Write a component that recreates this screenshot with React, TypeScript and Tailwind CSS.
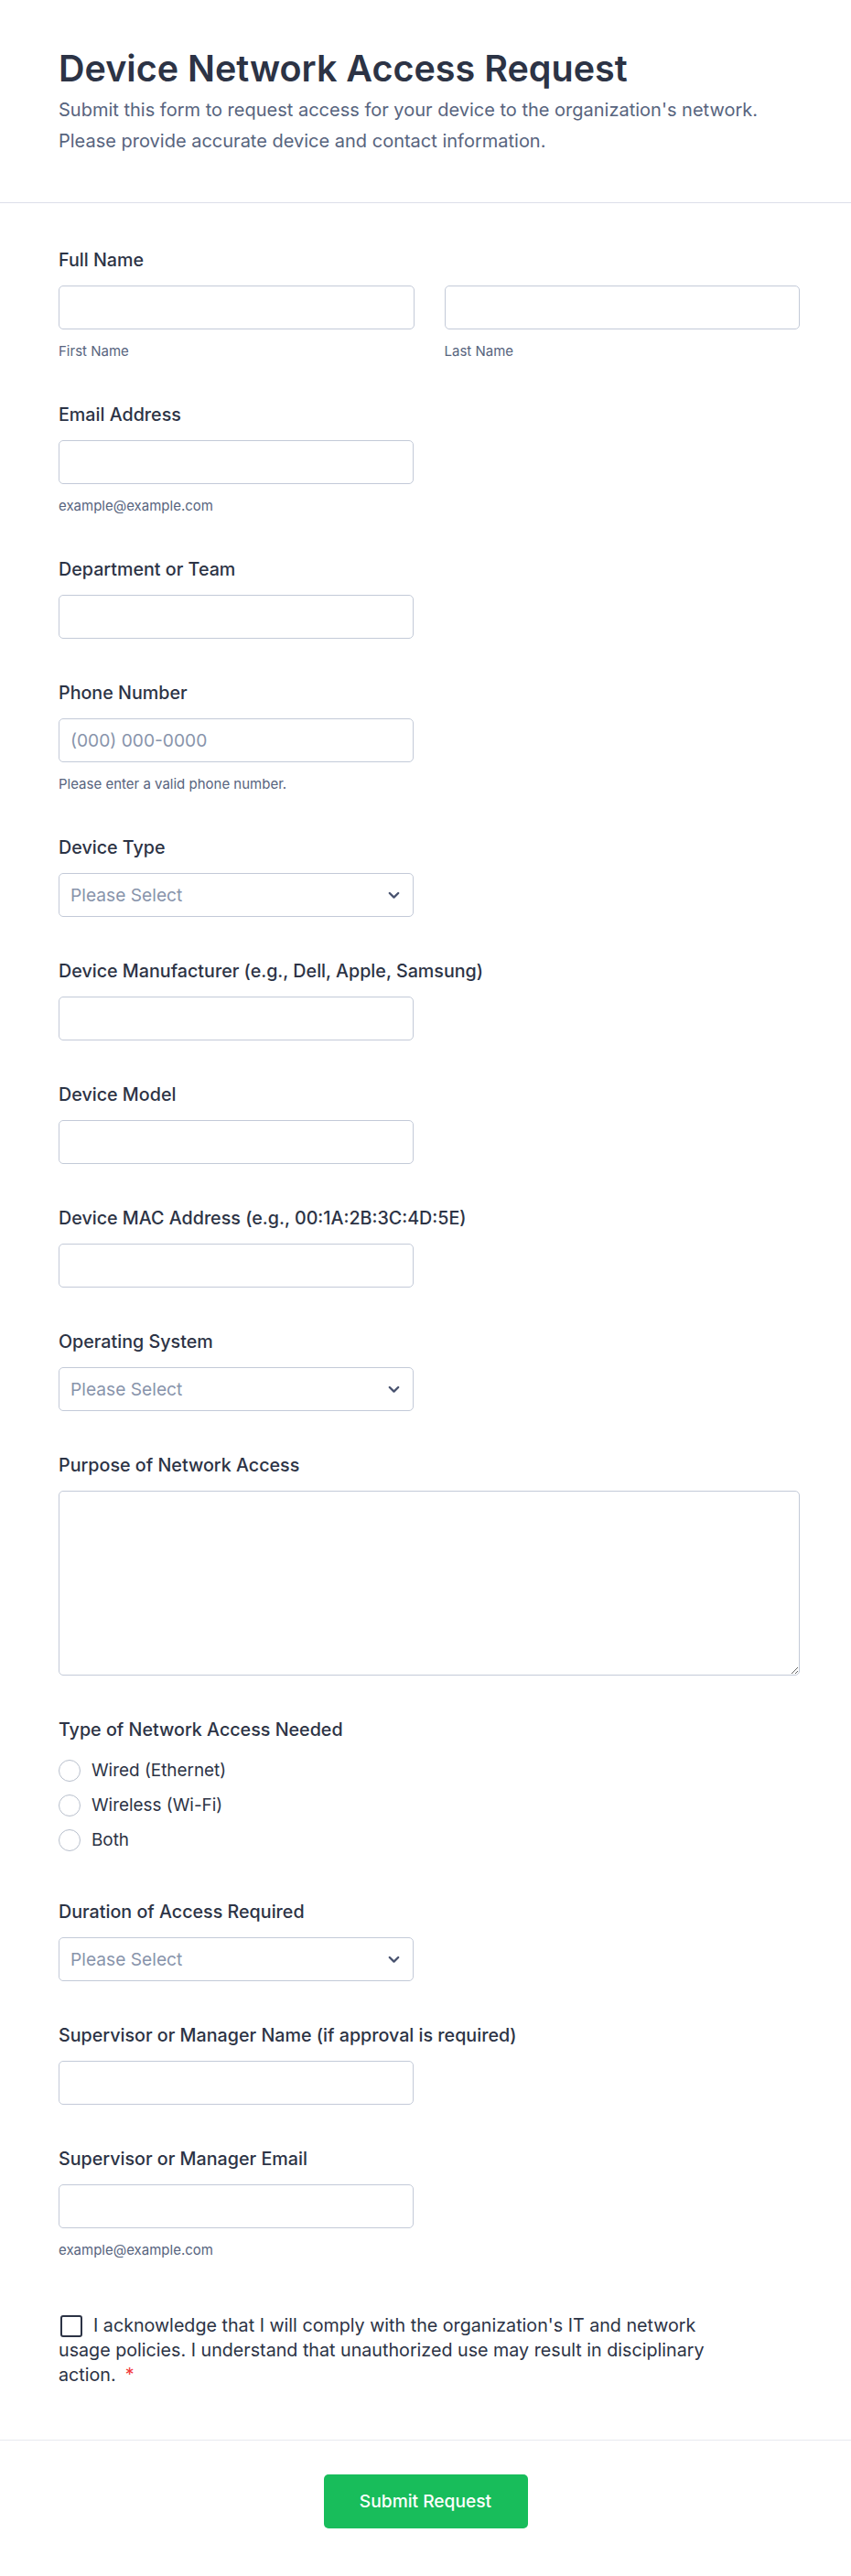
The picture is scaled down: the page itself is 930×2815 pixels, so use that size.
import type { ReactNode } from "react";

const font = { fontFamily: "Inter, 'Noto Sans', sans-serif" };

function Label({ children }: { children: ReactNode }) {
  return (
    <div className="text-[19.7px] leading-[24px] font-medium text-[#2c3345]">
      {children}
    </div>
  );
}

function Helper({ children }: { children: ReactNode }) {
  return (
    <div className="mt-[14px] text-[15px] leading-[20px] text-[#57647e]">
      {children}
    </div>
  );
}

function TextInput({ placeholder, wide }: { placeholder?: string; wide?: boolean }) {
  return (
    <input
      type="text"
      placeholder={placeholder}
      className={[
        "block h-[48px] rounded-[5px] border border-[#c3cad8] bg-white px-[12px] text-[19.2px] text-[#2c3345] outline-none placeholder:text-[#8894ab]",
        wide ? "w-full" : "w-[388px]",
      ].join(" ")}
    />
  );
}

function Select() {
  return (
    <div className="flex h-[48px] w-[388px] items-center justify-between rounded-[5px] border border-[#c3cad8] bg-white pl-[12px] pr-[14px]">
      <span className="text-[19.2px] text-[#8894ab]">Please Select</span>
      <svg width="13" height="9" viewBox="0 0 13 9" fill="none">
        <path
          d="M1.8 2 L6.5 6.6 L11.2 2"
          stroke="#4a5470"
          strokeWidth="2.4"
          strokeLinecap="round"
          strokeLinejoin="round"
        />
      </svg>
    </div>
  );
}

function Field({ label, children }: { label: string; children: ReactNode }) {
  return (
    <div className="mb-[47px]">
      <Label>{label}</Label>
      <div className="mt-[16px]">{children}</div>
    </div>
  );
}

const radios = ["Wired (Ethernet)", "Wireless (Wi-Fi)", "Both"];

export default function App() {
  return (
    <div className="min-h-screen bg-white" style={font}>
      {/* Header */}
      <div className="border-b border-[#dcdfe9] pl-16 pr-[40px] pt-[52px] pb-[50px]">
        <h1 className="text-[39.5px] leading-[46px] font-semibold text-[#2c3345]">
          Device Network Access Request
        </h1>
        <p className="mt-[5px] text-[20px] leading-[34px] text-[#57647e]">
          Submit this form to request access for your device to the organization's network.
          <br />
          Please provide accurate device and contact information.
        </p>
      </div>

      {/* Form body */}
      <div className="ml-16 w-[810px] pt-[50px]">
        <Field label="Full Name">
          <div className="grid grid-cols-2 gap-[33px]">
            <div>
              <TextInput wide />
              <Helper>First Name</Helper>
            </div>
            <div>
              <TextInput wide />
              <Helper>Last Name</Helper>
            </div>
          </div>
        </Field>

        <Field label="Email Address">
          <TextInput />
          <Helper>example@example.com</Helper>
        </Field>

        <Field label="Department or Team">
          <TextInput />
        </Field>

        <Field label="Phone Number">
          <TextInput placeholder="(000) 000-0000" />
          <Helper>Please enter a valid phone number.</Helper>
        </Field>

        <Field label="Device Type">
          <Select />
        </Field>

        <Field label="Device Manufacturer (e.g., Dell, Apple, Samsung)">
          <TextInput />
        </Field>

        <Field label="Device Model">
          <TextInput />
        </Field>

        <Field label="Device MAC Address (e.g., 00:1A:2B:3C:4D:5E)">
          <TextInput />
        </Field>

        <Field label="Operating System">
          <Select />
        </Field>

        <Field label="Purpose of Network Access">
          <textarea className="block h-[202px] w-full resize-y rounded-[5px] border border-[#c3cad8] bg-white px-[12px] py-[10px] text-[19.2px] text-[#2c3345] outline-none" />
        </Field>

        <div className="mb-[47px]">
          <Label>Type of Network Access Needed</Label>
          <div className="mt-[14px]">
            {radios.map((r) => (
              <div key={r} className="flex h-[38px] items-center gap-[12px]">
                <span className="h-[24px] w-[24px] rounded-full border-[1.5px] border-[#b8bfcc] bg-white" />
                <span className="text-[18.9px] text-[#2c3345]">{r}</span>
              </div>
            ))}
          </div>
        </div>

        <Field label="Duration of Access Required">
          <Select />
        </Field>

        <Field label="Supervisor or Manager Name (if approval is required)">
          <TextInput />
        </Field>

        <div>
          <Label>Supervisor or Manager Email</Label>
          <div className="mt-[16px]">
            <TextInput />
            <Helper>example@example.com</Helper>
          </div>
        </div>

        <div className="pt-[59px] pb-[57px] text-[19.7px] leading-[27px] text-[#2c3345]">
          <span className="mr-[12px] ml-[2px] inline-block h-[24px] w-[24px] rounded-[3px] border-2 border-[#2c3345] align-[-6px]" />
          I acknowledge that I will comply with the organization's IT and network
          <br />
          usage policies. I understand that unauthorized use may result in disciplinary
          <br />
          action.
          <span className="ml-[10px] align-top text-[#f23a3c]">*</span>
        </div>
      </div>

      {/* Footer */}
      <div className="flex justify-center border-t border-[#e8e9f0] pt-[37px] pb-[51px]">
        <button
          type="button"
          className="h-[59px] w-[223px] rounded-[5px] bg-[#18bd5b] text-[19.2px] font-medium text-white"
        >
          Submit Request
        </button>
      </div>
    </div>
  );
}
